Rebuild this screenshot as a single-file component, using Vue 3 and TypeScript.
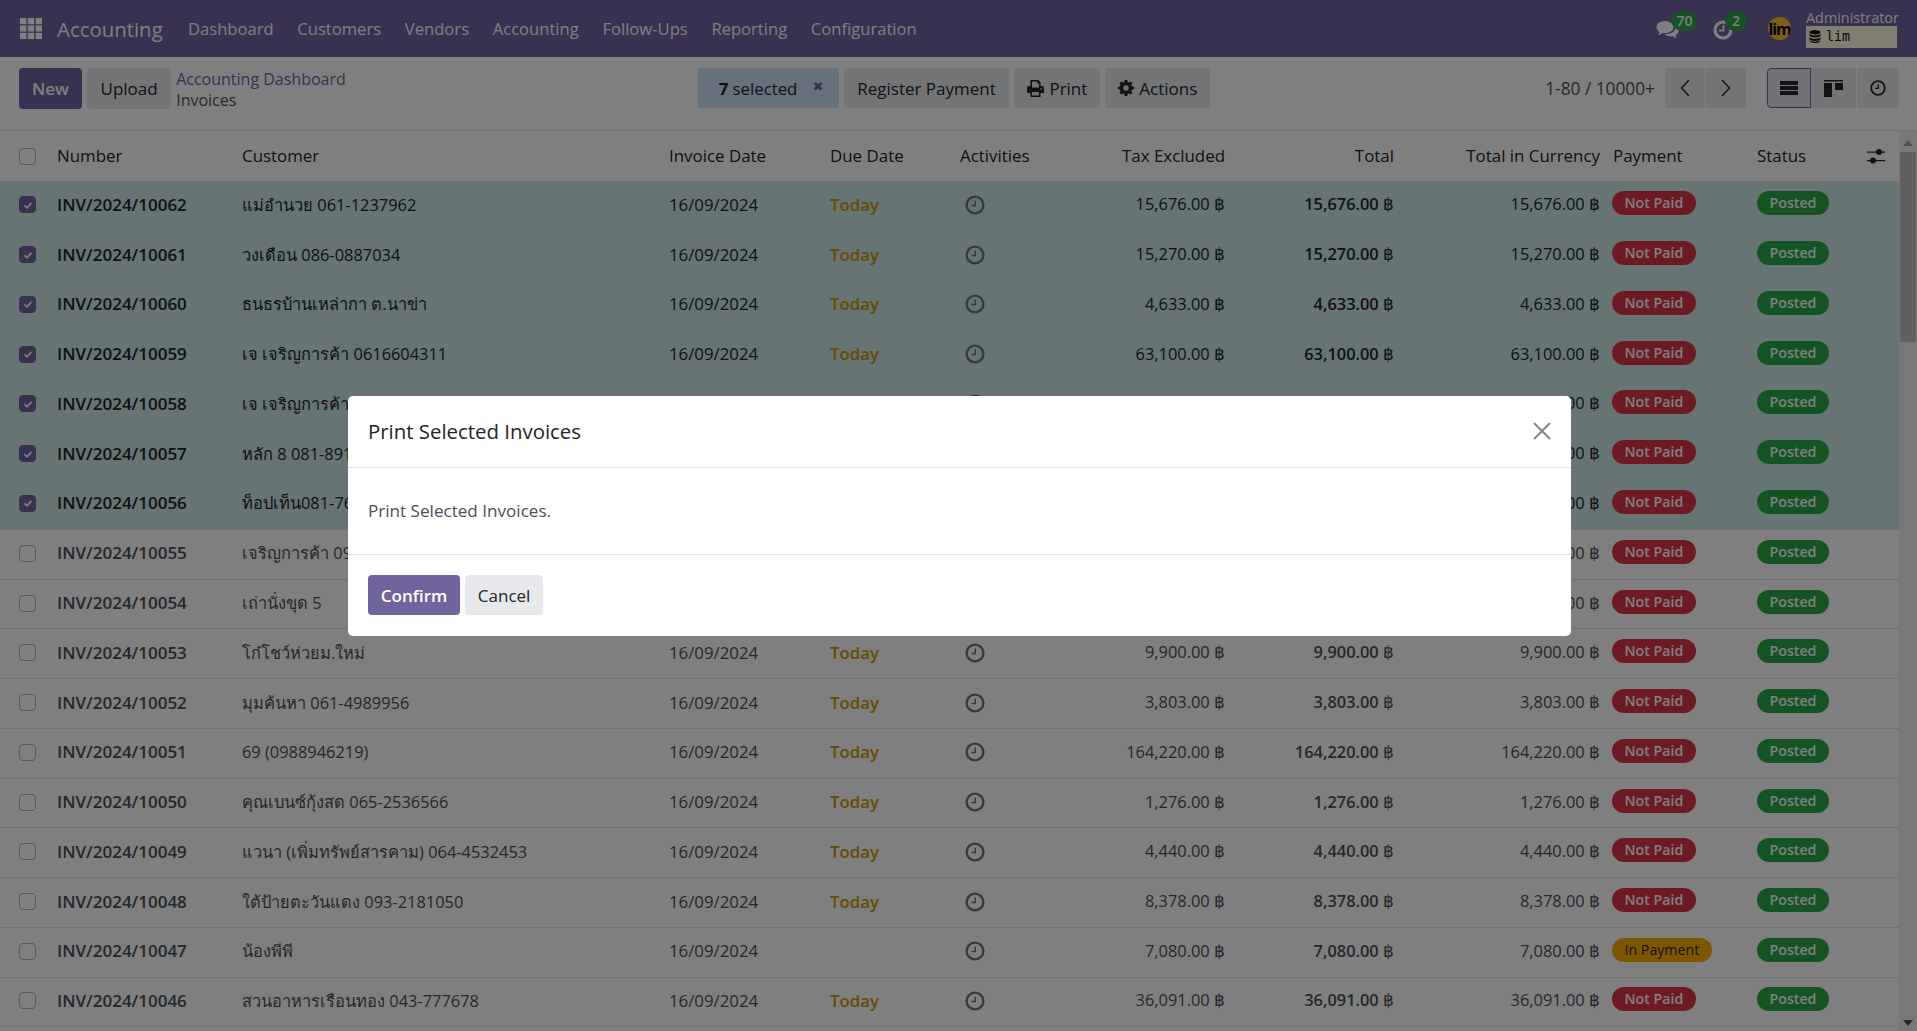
<script setup lang="ts">
interface Row {
  num: string
  customer: string
  date: string
  due: boolean
  amount: string
  payment: 'Not Paid' | 'In Payment'
  selected: boolean
}

const make = (num: number, customer: string, amount: string, selected = false, due = true, payment: Row['payment'] = 'Not Paid'): Row => ({
  num: `INV/2024/${num}`,
  customer,
  date: '16/09/2024',
  due,
  amount,
  payment,
  selected,
})

const rows: Row[] = [
  make(10062, 'แม่อำนวย 061-1237962', '15,676.00', true),
  make(10061, 'วงเดือน 086-0887034', '15,270.00', true),
  make(10060, 'ธนธรบ้านเหล่ากา ต.นาข่า', '4,633.00', true),
  make(10059, 'เจ เจริญการค้า 0616604311', '63,100.00', true),
  make(10058, 'เจ เจริญการค้า 0616604311', '12,400.00', true),
  make(10057, 'หลัก 8 081-8912345', '8,200.00', true),
  make(10056, 'ท็อปเท็น081-7654321', '6,500.00', true),
  make(10055, 'เจริญการค้า 0912345678', '5,300.00'),
  make(10054, 'เถ่านั่งขุด 5', '2,700.00'),
  make(10053, 'โก๋โชว์ห่วยม.ใหม่', '9,900.00'),
  make(10052, 'มุมค้นหา 061-4989956', '3,803.00'),
  make(10051, '69 (0988946219)', '164,220.00'),
  make(10050, 'คุณเบนซ์กุ้งสด 065-2536566', '1,276.00'),
  make(10049, 'แวนา (เพิ่มทรัพย์สารคาม) 064-4532453', '4,440.00'),
  make(10048, 'ใต้ป้ายตะวันแดง 093-2181050', '8,378.00'),
  make(10047, 'น้องพีพี', '7,080.00', false, false, 'In Payment'),
  make(10046, 'สวนอาหารเรือนทอง 043-777678', '36,091.00'),
]

const menu: string[] = ['Dashboard', 'Customers', 'Vendors', 'Accounting', 'Follow-Ups', 'Reporting', 'Configuration']
</script>

<template>
  <div class="app">
    <header class="nav">
      <svg class="apps" width="22" height="21" viewBox="0 0 22 21">
        <g fill="currentColor">
          <rect x="0" y="0" width="6.4" height="6.2" /><rect x="7.8" y="0" width="6.4" height="6.2" /><rect x="15.6" y="0" width="6.4" height="6.2" />
          <rect x="0" y="7.4" width="6.4" height="6.2" /><rect x="7.8" y="7.4" width="6.4" height="6.2" /><rect x="15.6" y="7.4" width="6.4" height="6.2" />
          <rect x="0" y="14.8" width="6.4" height="6.2" /><rect x="7.8" y="14.8" width="6.4" height="6.2" /><rect x="15.6" y="14.8" width="6.4" height="6.2" />
        </g>
      </svg>
      <span class="brand">Accounting</span>
      <nav class="menu">
        <span v-for="m in menu" :key="m">{{ m }}</span>
      </nav>
      <div class="systray">
        <div class="tray tray-chat">
          <svg width="24" height="20" viewBox="0 0 24 20">
            <path fill="currentColor" d="M9 1C4.2 1 .5 3.8.5 7.2c0 2 1.2 3.7 3.2 4.9-.3 1-.9 2-1.7 2.8 1.8-.2 3.5-1 4.7-2 .7.1 1.5.2 2.3.2 4.8 0 8.5-2.8 8.5-5.9S13.8 1 9 1z" />
            <path fill="currentColor" d="M19.4 6.3c.1.3.1.6.1.9 0 4-4.2 6.9-9.5 7-.5 0-1 0-1.4-.1 1.400 1.500 3.700 2.400 6.400 2.400.7 0 1.400-.1 2-.2 1 .9 2.400 1.600 4 1.800-.7-.7-1.200-1.600-1.500-2.500 1.900-1.100 3-2.700 3-4.500 0-2-1.100-3.700-3.100-4.800z" />
          </svg>
          <span class="count count-wide">70</span>
        </div>
        <div class="tray tray-clock">
          <svg width="20" height="20" viewBox="0 0 20 20">
            <circle cx="10" cy="10" r="8" fill="none" stroke="currentColor" stroke-width="3.2" />
            <path d="M10.500 5v5.500H6" fill="none" stroke="currentColor" stroke-width="1.800" />
          </svg>
          <span class="count">2</span>
        </div>
        <div class="avatar"><span>lim</span></div>
        <div class="user">
          <span class="user-name">Administrator</span>
          <span class="user-db">
            <svg width="12" height="13" viewBox="0 0 12 13">
              <g fill="currentColor">
                <ellipse cx="6" cy="2.200" rx="5.600" ry="2.200" />
                <path d="M.4 3.800C1.500 5 3.500 5.500 6 5.500s4.500-.5 5.600-1.700v2C10.500 7.100 8.500 7.500 6 7.500S1.500 7.100.4 5.800z" />
                <path d="M.4 7.300C1.500 8.500 3.500 9 6 9s4.500-.5 5.600-1.700v2C10.500 10.600 8.500 11 6 11S1.500 10.600.4 9.300z" />
                <path d="M.4 10.300c1.100 1 3.100 1.400 5.600 1.400s4.500-.4 5.600-1.400c0 1.500-2.500 2.700-5.600 2.700S.4 11.800.4 10.300z" />
              </g>
            </svg>
            <span class="mono">lim</span>
          </span>
        </div>
      </div>
    </header>

    <section class="panel">
      <div class="panel-left">
        <button class="btn primary">New</button>
        <button class="btn btn-up">Upload</button>
        <div class="crumbs">
          <span class="crumb-link">Accounting Dashboard</span>
          <span class="crumb-cur">Invoices</span>
        </div>
      </div>
      <div class="panel-center">
        <div class="sel"><span><b>7</b> selected</span><span class="sel-x">✖</span></div>
        <button class="btn btn-m">Register Payment</button>
        <button class="btn btn-m icon-btn">
          <svg width="17" height="17" viewBox="0 0 17 17">
            <path fill="currentColor" fill-rule="evenodd" d="M3.500 0h7.800L13.500 2.200V6h1.300A2.200 2.200 0 0 1 17 8.200V13h-3.500v4h-10v-4H0V8.200A2.200 2.200 0 0 1 2.200 6h1.300zM5 1.500V7.500h7V3.500h-1.800V1.500zM5 12v3.500h7V12zM14 8a.8.8 0 1 0 0 1.600.8.8 0 0 0 0-1.600z" />
          </svg>
          Print
        </button>
        <button class="btn btn-m icon-btn">
          <svg width="16" height="16" viewBox="0 0 16 16">
            <path fill="currentColor" fill-rule="evenodd" d="M6.700 0h2.600l.4 2.100 1.200.5L12.700 1.400l1.900 1.900-1.200 1.800.5 1.200 2.100.4v2.600l-2.100.4-.5 1.200 1.200 1.800-1.900 1.900-1.800-1.200-1.200.5-.4 2.100H6.700l-.4-2.100-1.200-.5-1.800 1.200-1.900-1.900 1.200-1.800-.5-1.200L0 9.300V6.700l2.100-.4.5-1.200-1.200-1.800 1.900-1.900 1.800 1.200 1.200-.5zM8 5.300a2.700 2.700 0 1 0 0 5.400 2.700 2.700 0 0 0 0-5.400z" />
          </svg>
          Actions
        </button>
      </div>
      <div class="panel-right">
        <span class="pager-text">1-80 / 10000+</span>
        <div class="group pager">
          <button class="seg seg-p">
            <svg width="12" height="20" viewBox="0 0 12 20"><path d="M10 2 2.500 10l7.500 8" fill="none" stroke="currentColor" stroke-width="1.500" /></svg>
          </button>
          <button class="seg seg-p">
            <svg width="12" height="20" viewBox="0 0 12 20"><path d="m2 2 7.500 8L2 18" fill="none" stroke="currentColor" stroke-width="1.500" /></svg>
          </button>
        </div>
        <div class="group views">
          <button class="seg seg-v active">
            <svg width="18" height="14" viewBox="0 0 18 14"><g fill="currentColor"><rect width="18" height="4" /><rect y="5" width="18" height="4" /><rect y="10" width="18" height="4" /></g></svg>
          </button>
          <button class="seg seg-v">
            <svg width="19" height="17" viewBox="0 0 19 17"><g fill="currentColor"><rect width="19" height="1.500" /><rect y="3" width="8" height="14" /><rect x="11" y="3" width="8" height="7" /></g></svg>
          </button>
          <button class="seg seg-v seg-last">
            <svg width="16" height="16" viewBox="0 0 16 16"><circle cx="8" cy="8" r="6.800" fill="none" stroke="currentColor" stroke-width="1.800" /><path d="M8.300 4v4.300H5" fill="none" stroke="currentColor" stroke-width="1.300" /></svg>
          </button>
        </div>
      </div>
    </section>

    <section class="content">
      <div class="table-wrap">
        <table class="list">
          <thead>
            <tr>
              <th class="td-check"><span class="check"></span></th>
              <th>Number</th>
              <th>Customer</th>
              <th>Invoice Date</th>
              <th>Due Date</th>
              <th>Activities</th>
              <th class="right">Tax Excluded</th>
              <th class="right">Total</th>
              <th class="right">Total in Currency</th>
              <th class="th-pay">Payment</th>
              <th>Status</th>
              <th class="td-opt">
                <svg width="18" height="16" viewBox="0 0 18 16">
                  <g fill="currentColor">
                    <rect y="3.500" width="18" height="1.200" /><circle cx="12" cy="4" r="3" />
                    <rect y="12" width="18" height="1.200" /><circle cx="6" cy="12.500" r="3" />
                  </g>
                </svg>
              </th>
            </tr>
          </thead>
          <tbody>
            <tr v-for="r in rows" :key="r.num" :class="{ selected: r.selected }">
              <td class="td-check">
                <span class="check" :class="{ on: r.selected }">
                  <svg v-if="r.selected" width="12" height="12" viewBox="0 0 12 12"><path d="m2.500 6.300 2.500 2.500 4.500-5" fill="none" stroke="currentColor" stroke-width="1.800" /></svg>
                </span>
              </td>
              <td class="td-num">{{ r.num }}</td>
              <td class="td-cust">{{ r.customer }}</td>
              <td class="td-date">{{ r.date }}</td>
              <td class="td-due"><template v-if="r.due">Today</template></td>
              <td class="td-activity">
                <svg width="20" height="20" viewBox="0 0 20 20"><circle cx="10" cy="10" r="8.400" fill="none" stroke="currentColor" stroke-width="2.400" /><path d="M10.300 5.500v5H6.500" fill="none" stroke="currentColor" stroke-width="1.400" /></svg>
              </td>
              <td class="right"><span>{{ r.amount }} <span class="baht">฿</span></span></td>
              <td class="right strong"><span>{{ r.amount }} <span class="baht">฿</span></span></td>
              <td class="right"><span>{{ r.amount }} <span class="baht">฿</span></span></td>
              <td class="td-pay">
                <span class="pill" :class="r.payment === 'Not Paid' ? 'red' : 'amber'">{{ r.payment }}</span>
              </td>
              <td><span class="pill green">Posted</span></td>
              <td></td>
            </tr>
          </tbody>
        </table>
      </div>
      <aside class="scroll">
        <span class="arrow up"></span>
        <span class="thumb"></span>
        <span class="arrow down"></span>
      </aside>
    </section>

    <div class="backdrop">
      <div class="modal">
        <div class="modal-head">
          <h4>Print Selected Invoices</h4>
          <svg class="close" width="18" height="18" viewBox="0 0 18 18"><path d="m1 1 16 16M17 1 1 17" fill="none" stroke="currentColor" stroke-width="2" /></svg>
        </div>
        <div class="modal-body">Print Selected Invoices.</div>
        <div class="modal-foot">
          <button class="btn primary">Confirm</button>
          <button class="btn">Cancel</button>
        </div>
      </div>
    </div>
  </div>
</template>

<style>
html, body { margin: 0; height: 100%; overflow: hidden; }
</style>

<style scoped>
.app {
  position: relative;
  height: 1031px;
  display: flex;
  flex-direction: column;
  overflow: hidden;
  background: #fff;
  color: #495057;
  font-family: "Open Sans", "Noto Sans", sans-serif;
  font-size: 16.4px;
}
button { font-family: inherit; }

.nav {
  flex: 0 0 57px;
  box-sizing: border-box;
  display: flex;
  align-items: center;
  background: #71639e;
  color: #fff;
  padding-left: 20px;
}
.apps { flex: none; margin-right: 15px; }
.brand { font-size: 20.400px; margin-right: 26px; width: 105px; white-space: nowrap; }
.menu { display: flex; gap: 23.700px; font-size: 16.600px; }
.systray { margin-left: auto; display: flex; align-items: center; height: 100%; padding-right: 20px; }
.tray { position: relative; display: flex; }
.tray-chat { margin-right: 33px; margin-top: 2px; }
.tray-clock { margin-right: 35px; margin-top: 2px; }
.count {
  position: absolute;
  top: -9px;
  left: 12px;
  height: 20px;
  min-width: 22px;
  border-radius: 10px;
  background: #28a745;
  color: #fff;
  font-size: 14px;
  font-weight: 600;
  line-height: 20px;
  text-align: center;
}
.count-wide { min-width: 25px; left: 16px; }
.avatar {
  width: 23px;
  height: 23px;
  border-radius: 50%;
  background: #fbc02d;
  color: #000;
  display: flex;
  align-items: center;
  justify-content: center;
  margin-right: 15px;
  font-size: 16px;
  font-weight: 700;
  letter-spacing: -1.200px;
  overflow: hidden;
}
.user { display: flex; flex-direction: column; width: 91px; }
.user-name { font-size: 14.400px; line-height: 16px; white-space: nowrap; }
.user-db {
  height: 22px;
  display: flex;
  align-items: center;
  gap: 5px;
  padding-left: 3px;
  background: #fffde0;
  color: #111;
}
.mono { font-family: "DejaVu Sans Mono", monospace; font-size: 13.300px; }

.panel {
  flex: 0 0 74px;
  box-sizing: border-box;
  display: grid;
  grid-template-columns: 1fr auto 1fr;
  padding: 11px 18px 0 19px;
  border-bottom: 1px solid #dee2e6;
  align-items: start;
}
.panel-left { display: flex; gap: 5px; }
.panel-center { display: flex; gap: 5px; margin-right: 10px; }
.panel-right { display: flex; justify-content: flex-end; align-items: center; height: 40px; font-size: 17.300px; }
.btn {
  height: 41px;
  border: 0;
  border-radius: 4px;
  padding: 0 13px;
  background: #e7e9ed;
  color: #212529;
  font-size: 17px;
  font-weight: 500;
  cursor: pointer;
}
.btn-up { padding: 0 13.500px; }
.btn.primary { background: #71639e; color: #fff; font-weight: 600; }
.btn-m { height: 40px; padding: 0 13.600px; font-weight: 400; }
.icon-btn { display: inline-flex; align-items: center; gap: 5px; padding: 0 13px; }
.crumbs { display: flex; flex-direction: column; line-height: 21px; font-size: 16px; padding-top: 1px; }
.crumb-link { color: #71639e; font-weight: 500; }
.crumb-cur { color: #495057; }
.sel {
  width: 141px;
  box-sizing: border-box;
  height: 40px;
  border-radius: 4px;
  background: #cde3f6;
  color: #212529;
  display: flex;
  align-items: center;
  padding-left: 21px;
  gap: 15px;
  font-size: 16.800px;
}
.sel-x { color: #71639e; font-family: "DejaVu Sans", sans-serif; font-size: 13px; margin-top: -4px; }
.pager-text { margin-right: 10px; }
.group { display: flex; border-radius: 4px; overflow: hidden; background: #e7e9ed; height: 40px; }
.pager { width: 81px; margin-right: 21px; }
.seg { border: 0; background: transparent; color: #212529; padding: 0; display: flex; align-items: center; justify-content: center; }
.seg-p { width: 40px; }
.seg-p + .seg-p { border-left: 1px solid #fff; flex: 1; }
.seg-v { width: 46px; border-right: 1px solid #fff; box-sizing: border-box; }
.seg-last { border-right: 0; width: 42px; }
.seg-v.active { width: 44px; border: 1px solid #71639e; background: #e5e2ee; border-radius: 4px 0 0 4px; }

.content { flex: 1; display: flex; min-height: 0; }
.table-wrap { flex: 1; min-width: 0; overflow: hidden; }
.list, .list thead, .list tbody { display: block; width: 1899px; }
.list tr {
  display: grid;
  grid-template-columns: 52px 185px 427px 161px 130px 145px 130px 169px 206px 147px 108px 39px;
}
th, td {
  display: flex;
  align-items: center;
  padding: 0 5px;
  white-space: nowrap;
  overflow: hidden;
  box-sizing: border-box;
  min-width: 0;
  line-height: 22px;
}
th { height: 49.500px; font-size: 16.900px; font-weight: 500; color: #212529; padding-top: 1px; }
td { height: 49.770px; border-top: 1px solid #dee2e6; padding-bottom: 2px; }
tbody tr:last-child td { border-bottom: 1px solid #dee2e6; }
.right { justify-content: flex-end; }
.strong { font-weight: 600; }
.baht { font-family: "Liberation Sans", sans-serif; font-size: 17px; font-weight: 400; }
.td-check { padding-left: 19px; padding-right: 0; }
.td-pay { padding-left: 7px; padding-right: 0; }
.th-pay { padding-left: 8px; }
.td-opt { padding: 0 0 0 7px; }
.td-opt svg { display: block; }
.td-num { font-weight: 600; font-size: 17px; }
.td-date { font-size: 16.800px; }
.selected td { background: #cde8e9; color: #212529; }
td.td-due { color: #d09400; font-weight: 600; font-size: 16.800px; }
td.td-activity { color: #6c757d; padding-left: 10px; }
.td-activity svg { display: block; }
.check {
  flex: none;
  width: 17px;
  height: 17px;
  box-sizing: border-box;
  border: 1px solid #adb5bd;
  border-radius: 4px;
  background: #fff;
  display: flex;
  align-items: center;
  justify-content: center;
}
.check.on { background: #71639e; border-color: #71639e; color: #fff; }
.pill {
  display: inline-block;
  height: 24px;
  line-height: 23px;
  padding: 0 12.500px;
  border-radius: 12px;
  font-size: 14.200px;
  font-weight: 600;
  margin-top: -3px;
}
.red { background: #dc3545; color: #fff; }
.green { background: #28a745; color: #fff; }
.amber { background: #ffac00; color: #212529; font-weight: 500; }

.scroll { flex: 0 0 18px; background: #f1f1f1; display: flex; flex-direction: column; align-items: center; position: relative; }
.arrow { width: 0; height: 0; border-left: 5px solid transparent; border-right: 5px solid transparent; }
.up { border-bottom: 6px solid #a3a3a3; margin-top: 9px; }
.down { border-top: 6px solid #505050; position: absolute; bottom: 5px; }
.thumb { width: 16px; height: 190px; background: #c1c1c1; margin-top: 6px; }

.backdrop {
  position: absolute;
  inset: 0;
  box-sizing: border-box;
  padding-left: 2px;
  background: rgba(0, 0, 0, .5);
  display: flex;
  align-items: center;
  justify-content: center;
}
.modal { width: 1223px; height: 240px; background: #fff; border-radius: 5px; display: flex; flex-direction: column; box-sizing: border-box; color: #212529; }
.modal-head { height: 72px; box-sizing: border-box; border-bottom: 1px solid #dee2e6; display: flex; align-items: center; justify-content: space-between; padding: 0 20px; }
.modal-head h4 { margin: 0; font-size: 20.400px; font-weight: 500; }
.close { color: #868686; }
.modal-body { height: 87px; box-sizing: border-box; border-bottom: 1px solid #dee2e6; display: flex; align-items: center; padding: 0 20px; color: #495057; font-size: 17.100px; }
.modal-foot { flex: 1; display: flex; gap: 5px; padding: 20px 20px 0; align-items: flex-start; }
.modal-foot .btn { height: 40px; padding: 1px 12.800px 0; }
</style>
